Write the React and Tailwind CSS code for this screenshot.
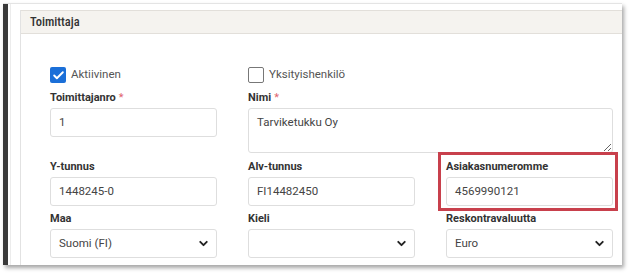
import { Check, ChevronDown } from "lucide-react";

const FONT = "font-['Roboto','Liberation_Sans',sans-serif]";

function Label({ children, required }) {
  return (
    <div className="h-[14px] text-[11px] leading-[14px] font-bold text-[#333]">
      {children}
      {required && <span className="ml-[3px] font-normal text-[#e0646e]">*</span>}
    </div>
  );
}

function Field({ label, required, value }) {
  return (
    <div>
      <Label required={required}>{label}</Label>
      <div className="mt-[3px] flex h-[29px] items-center rounded-[3px] border border-[#dedede] bg-white px-[8px] text-[11.5px] text-[#444]">
        {value}
      </div>
    </div>
  );
}

function SelectField({ label, value }) {
  return (
    <div>
      <Label>{label}</Label>
      <div className="mt-[3px] flex h-[29px] items-center justify-between rounded-[3px] border border-[#dedede] bg-white pr-[6px] pl-[8px] text-[11.5px] text-[#444]">
        <span>{value}</span>
        <ChevronDown size={13} strokeWidth={3.5} className="text-[#222]" />
      </div>
    </div>
  );
}

function CheckRow({ checked, label }) {
  return (
    <div className="flex h-[16px] items-center">
      {checked ? (
        <div className="flex h-[16px] w-[16px] items-center justify-center rounded-[2px] bg-[#1b6fd8]">
          <Check size={13} strokeWidth={3.5} className="text-white" />
        </div>
      ) : (
        <div className="h-[16px] w-[16px] rounded-[2px] border border-[#777] bg-white" />
      )}
      <span className="ml-[5px] text-[11.5px] text-[#555]">{label}</span>
    </div>
  );
}

export default function App() {
  return (
    <div className={`h-[275px] w-[632px] bg-white pt-[3px] pl-[3px] ${FONT}`}>
      <div className="flex h-[262px] w-[619px] border-t border-[#e4e4e4] bg-white shadow-[2px_3px_4px_rgba(0,0,0,0.35)]">
        <div className="w-[5px] bg-[#3a3a3a]" />
        <div className="ml-[2px] w-px bg-[#ececec]" />
        <div className="ml-[9px] mt-[6px] flex flex-1 flex-col border-l border-[#e2e2e2]">
          <div className="flex h-[24px] items-center border-y border-[#e2dfda] bg-[#f5f3ef] pl-[9px]">
            <span className="font-['Roboto_Condensed','Roboto',sans-serif] text-[12.5px] font-medium text-[#333]">
              Toimittaja
            </span>
          </div>

          <div className="pt-[33px] pl-[29px]">
            <div className="grid grid-cols-[167px_167px_167px] gap-x-[31px]">
              <CheckRow checked label="Aktiivinen" />
              <CheckRow label="Yksityishenkilö" />
            </div>

            <div className="mt-[8px] grid grid-cols-[167px_167px_167px] gap-x-[31px]">
              <Field label="Toimittajanro" required value="1" />
              <div className="col-span-2">
                <Label required>Nimi</Label>
                <textarea
                  readOnly
                  value="Tarviketukku Oy"
                  className="mt-[3px] block h-[45px] w-full rounded-[3px] border border-[#dedede] bg-white px-[8px] pt-[6px] text-[11.5px] leading-[14px] text-[#444] outline-none"
                />
              </div>
            </div>

            <div className="mt-[7px] grid grid-cols-[167px_167px_167px] gap-x-[31px]">
              <Field label="Y-tunnus" value="1448245-0" />
              <Field label="Alv-tunnus" value="FI14482450" />
              <div className="relative">
                <Field label="Asiakasnumeromme" value="4569990121" />
                <div className="absolute -top-[8px] -right-[5px] -bottom-[5px] -left-[8px] border-[3px] border-[#c8404c]" />
              </div>
            </div>

            <div className="mt-[6px] grid grid-cols-[167px_167px_167px] gap-x-[31px]">
              <SelectField label="Maa" value="Suomi (FI)" />
              <SelectField label="Kieli" value="" />
              <SelectField label="Reskontravaluutta" value="Euro" />
            </div>
          </div>
        </div>
      </div>
    </div>
  );
}
